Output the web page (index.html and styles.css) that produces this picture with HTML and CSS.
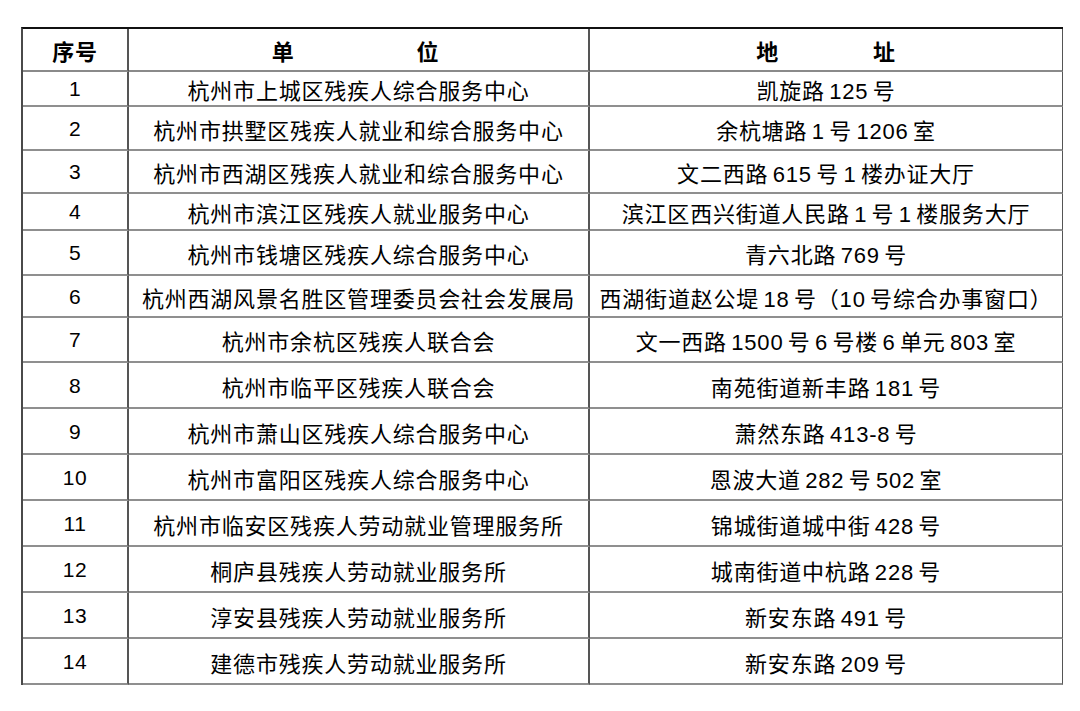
FILE: index.html
```html
<!DOCTYPE html>
<html lang="zh-CN">
<head>
<meta charset="utf-8">
<title>残疾人就业服务机构</title>
<link rel="stylesheet" href="styles.css">
</head>
<body>
<div class="sheet">
  <div class="cell head r0">序号</div>
  <div class="cell head r0 spread"><span>单</span><span>位</span></div>
  <div class="cell head r0 spread narrow last"><span>地</span><span>址</span></div>

  <div class="cell num r1">1</div>
  <div class="cell r1">杭州市上城区残疾人综合服务中心</div>
  <div class="cell r1 last">凯旋路 125 号</div>

  <div class="cell num r2">2</div>
  <div class="cell r2">杭州市拱墅区残疾人就业和综合服务中心</div>
  <div class="cell r2 last">余杭塘路 1 号 1206 室</div>

  <div class="cell num r3">3</div>
  <div class="cell r3">杭州市西湖区残疾人就业和综合服务中心</div>
  <div class="cell r3 last">文二西路 615 号 1 楼办证大厅</div>

  <div class="cell num r4">4</div>
  <div class="cell r4">杭州市滨江区残疾人就业服务中心</div>
  <div class="cell r4 last">滨江区西兴街道人民路 1 号 1 楼服务大厅</div>

  <div class="cell num r5">5</div>
  <div class="cell r5">杭州市钱塘区残疾人综合服务中心</div>
  <div class="cell r5 last">青六北路 769 号</div>

  <div class="cell num r6">6</div>
  <div class="cell r6">杭州西湖风景名胜区管理委员会社会发展局</div>
  <div class="cell r6 last">西湖街道赵公堤 18 号（10 号综合办事窗口）</div>

  <div class="cell num r7">7</div>
  <div class="cell r7">杭州市余杭区残疾人联合会</div>
  <div class="cell r7 last">文一西路 1500 号 6 号楼 6 单元 803 室</div>

  <div class="cell num r8">8</div>
  <div class="cell r8">杭州市临平区残疾人联合会</div>
  <div class="cell r8 last">南苑街道新丰路 181 号</div>

  <div class="cell num r9">9</div>
  <div class="cell r9">杭州市萧山区残疾人综合服务中心</div>
  <div class="cell r9 last">萧然东路 413-8 号</div>

  <div class="cell num r10">10</div>
  <div class="cell r10">杭州市富阳区残疾人综合服务中心</div>
  <div class="cell r10 last">恩波大道 282 号 502 室</div>

  <div class="cell num r11">11</div>
  <div class="cell r11">杭州市临安区残疾人劳动就业管理服务所</div>
  <div class="cell r11 last">锦城街道城中街 428 号</div>

  <div class="cell num r12">12</div>
  <div class="cell r12">桐庐县残疾人劳动就业服务所</div>
  <div class="cell r12 last">城南街道中杭路 228 号</div>

  <div class="cell num r13">13</div>
  <div class="cell r13">淳安县残疾人劳动就业服务所</div>
  <div class="cell r13 last">新安东路 491 号</div>

  <div class="cell num r14">14</div>
  <div class="cell r14">建德市残疾人劳动就业服务所</div>
  <div class="cell r14 last">新安东路 209 号</div>
</div>
</body>
</html>
```

FILE: styles.css
```css
html, body {
  margin: 0;
  padding: 0;
  background: #ffffff;
}

body {
  font-family: "Liberation Sans", "Noto Sans CJK SC", sans-serif;
  color: #000;
}

.sheet {
  margin: 27px 0 0 21px;
  width: 1042px;
  box-sizing: border-box;
  display: grid;
  grid-template-columns: 106px 461px 473px;
  grid-template-rows: 43px 35px 44px 43px 37px 45px 42px 45px 46px 46px 46px 46px 46px 46px 46px;
  border-top: 2px solid #111;
  border-left: 2px solid #4a4a4a;
}

.cell {
  box-sizing: border-box;
  display: flex;
  align-items: center;
  justify-content: center;
  border-right: 2px solid #555;
  border-bottom: 2px solid #8f8f8f;
  font-size: 22px;
  letter-spacing: 0.8px;
  word-spacing: -2.5px;
  white-space: nowrap;
  padding-top: 1px;
}

.cell.last {
  border-right: 1.5px solid #555;
}

.head {
  font-weight: 700;
  border-bottom-color: #8a8a8a;
}

.spread {
  gap: 122px;
  padding-right: 6px;
}

.spread.narrow {
  gap: 94px;
  padding-right: 0;
}

.num {
  font-size: 21px;
  letter-spacing: 0.5px;
}
```
